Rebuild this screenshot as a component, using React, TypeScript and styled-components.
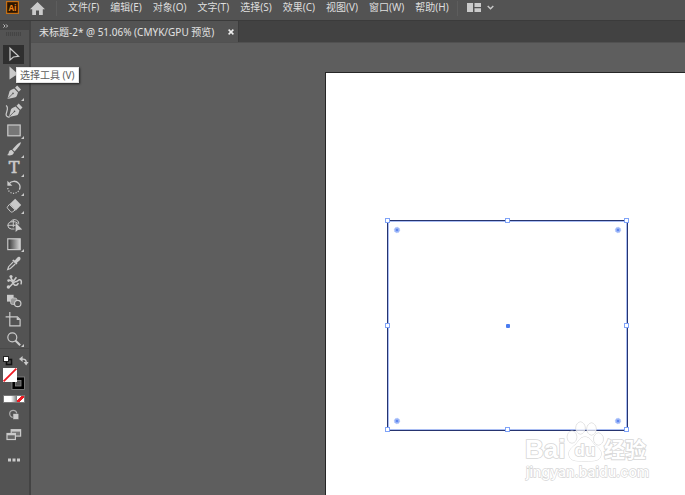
import React from 'react';
import styled, { createGlobalStyle } from 'styled-components';

const ui = '"Noto Sans", "Noto Sans CJK SC", sans-serif';
const ink = '#cacaca';

const GlobalStyle = createGlobalStyle`
  * { box-sizing: border-box; }
  body { margin: 0; background: #5e5e5e; font-family: ${ui}; overflow: hidden; }
  button { margin: 0; padding: 0; border: 0; background: none; color: inherit; font: inherit; cursor: default; }
  svg { display: block; overflow: visible; }
`;

const Window = styled.div`
  display: flex;
  flex-direction: column;
  height: 100vh;
  color: #dedede;
  font-size: 10px;
`;

const MenuBar = styled.header`
  display: flex;
  flex: none;
  align-items: flex-start;
  height: 21px;
  padding: 1px 0 0 6px;
  background: #535353;
  border-bottom: 1px solid #3b3b3b;
`;

const HomeButton = styled.button`
  margin: 1px 11px 0;
`;

const Divider = styled.span`
  width: 1px;
  height: 15px;
  background: #5d5d5d;
`;

const Menus = styled.nav`
  display: flex;
  gap: 11px;
  margin: 0 8px 0 11px;
`;

const MenuButton = styled.button`
  line-height: 13px;
  white-space: nowrap;
`;

const LayoutButton = styled.button`
  display: flex;
  gap: 6px;
  align-items: center;
  margin: 2px 0 0 9px;
`;

const Workspace = styled.div`
  display: flex;
  flex: 1;
  min-height: 0;
`;

const Toolbar = styled.aside`
  position: relative;
  z-index: 2;
  display: flex;
  flex: none;
  flex-direction: column;
  width: 31px;
  background: #535353;
  border-right: 2px solid #434343;
`;

const ToolbarHead = styled.button`
  flex: none;
  height: 9px;
  padding-left: 3px;
  background: #454545;
`;

const Grip = styled.div`
  flex: none;
  height: 4px;
  margin: 2px 8px 9px 6px;
  background: repeating-linear-gradient(90deg, #454545 0 1px, #505050 1px 2px);
`;

const Tools = styled.div`
  display: grid;
  flex: none;
  grid-auto-rows: 1fr;
  height: 303px;
`;

const ToolButton = styled.button<{ $active?: boolean; $more?: boolean }>`
  position: relative;
  width: 21px;
  margin-left: 3px;
  padding-left: 2px;
  background: ${p => (p.$active ? '#2f2f2f' : 'transparent')};
  &::after {
    content: '';
    display: ${p => (p.$more ? 'block' : 'none')};
    position: absolute;
    right: 0;
    bottom: 1px;
    border-left: 3px solid transparent;
    border-bottom: 3px solid ${ink};
  }
`;

const Tooltip = styled.div`
  position: absolute;
  left: 16px;
  top: 46px;
  padding: 0 3px;
  background: #fff;
  border: 1px solid #e4e4e4;
  box-shadow: 1px 1px 2px #222;
  color: #5d5d5d;
  line-height: 14px;
  white-space: nowrap;
`;

const ColorControls = styled.div`
  display: flex;
  flex-direction: column;
  padding: 4px 0 0 3px;
  border-top: 1px solid #494949;
`;

const SwapRow = styled.div`
  display: flex;
  gap: 7px;
  height: 15px;
`;

const Modes = styled.div`
  display: flex;
  width: 22px;
  height: 8px;
  margin-top: 5px;
  border: 1px solid #777;
`;

const Mode = styled.button<{ $fill: string }>`
  flex: 1;
  background: ${p => p.$fill};
`;

const Extras = styled.div`
  display: flex;
  flex-direction: column;
  align-items: flex-start;
  gap: 3px;
  padding: 3px 0 0 2px;
`;

const ExtraButton = styled.button`
  height: 18px;
`;

const Documents = styled.main`
  display: flex;
  flex: 1;
  flex-direction: column;
  min-width: 0;
`;

const TabStrip = styled.div`
  display: flex;
  flex: none;
  height: 22px;
  background: #424242;
  border-bottom: 1px solid #515151;
`;

const Tab = styled.div`
  display: flex;
  gap: 14px;
  align-items: center;
  padding: 0 4px 0 8px;
  background: #535353;
  border-right: 1px solid #3c3c3c;
  color: #e2e2e2;
  white-space: nowrap;
`;

const Canvas = styled.div`
  display: flex;
  flex: 1;
  min-height: 0;
  padding: 29px 0 0 294px;
  background: #5e5e5e;
`;

const Artboard = styled.div`
  position: relative;
  flex: 1;
  background: #fff;
  border: solid #262626;
  border-width: 1px 0 0 1px;
`;

const Shape = styled.div`
  position: absolute;
  left: 62px;
  top: 148px;
  width: 239px;
  height: 209px;
  box-shadow: 0 0 0 1px #26346f, inset 0 0 0 1px #a9bdf3;
`;

const Handle = styled.i<{ $x: string; $y: string }>`
  position: absolute;
  left: ${p => p.$x};
  top: ${p => p.$y};
  width: 5px;
  height: 5px;
  margin: -3px;
  background: #fff;
  border: 1px solid #7fa3f8;
`;

const Corner = styled.i<{ $right?: boolean; $low?: boolean }>`
  position: absolute;
  ${p => (p.$right ? 'right: 6px;' : 'left: 6px;')}
  ${p => (p.$low ? 'bottom: 6px;' : 'top: 6px;')}
`;

const Center = styled.i`
  position: absolute;
  left: 50%;
  top: 50%;
  width: 4px;
  height: 4px;
  margin: -2px;
  border-radius: 1px;
  background: #4a7cf0;
`;

const Watermark = styled.div`
  position: absolute;
  left: 200px;
  top: 346px;
`;

const Icon = ({ children, w = 18, h = 18 }: { children: React.ReactNode; w?: number; h?: number }) => (
  <svg width={w} height={h} viewBox={`0 0 ${w} ${h}`} fill="none" stroke={ink} strokeWidth="1.2" aria-hidden="true">
    {children}
  </svg>
);

const solid = { fill: ink, stroke: 'none' };

const Nib = () => (
  <>
    <path d="M2.4 16 4.2 9.4c.2-1.400 1-2.200 2.200-2.700l2.700-1.100L13 9.600l-1 2.800c-.5 1.200-1.200 1.800-2.600 2.200z" {...solid} />
    <path d="M10 4.800 12.200 2.600 16 6.400l-2.200 2.300z" {...solid} />
    <path d="M2.800 15.600 7.600 10.800" stroke="#535353" strokeWidth="0.8" />
    <circle cx="8" cy="10.400" r="0.800" fill="#535353" stroke="none" />
  </>
);

const tools: { name: string; more?: boolean; art: React.ReactNode }[] = [
  { name: '选择工具', art: <path d="M5 3.2V15l3.4-3 5.2-.6z" /> },
  { name: '直接选择工具', art: <path d="M4.5 2.500v13L10 11.800l3.500-1.400z" {...solid} /> },
  { name: '钢笔工具', more: true, art: <Nib /> },
  {
    name: '曲率工具',
    art: (
      <>
        <g transform="translate(1.500 -1)"><Nib /></g>
        <path d="M1 3.600C4.400 5.600 1.200 9.800 1.100 12.400c0 2 1.700 3 3.600 2.600" />
      </>
    ),
  },
  { name: '矩形工具', more: true, art: <rect x="2.8" y="4" width="12.4" height="10.8" fill="#777" /> },
  {
    name: '画笔工具',
    more: true,
    art: (
      <>
        <path d="M15.800 2.200C14.400 1.900 9.800 6.600 7.400 9.400l2.200 2c2.800-2.800 7-8 6.200-9.200z" {...solid} />
        <path d="M6.700 10.100c-2.300-.2-2.700 1.500-3 2.700-.3 1-.9 1.900-1.800 2.300 2.900.8 6.800.2 7-2.900z" {...solid} />
      </>
    ),
  },
  {
    name: '文字工具',
    more: true,
    art: (
      <text x="9" y="14" textAnchor="middle" fontFamily="DejaVu Serif" fontSize="16" fill={ink} stroke={ink} strokeWidth="0.6">T</text>
    ),
  },
  {
    name: '旋转工具',
    more: true,
    art: (
      <>
        <path d="M4 5.800C6.400 2.500 11.200 2.500 13.600 5.400c1.600 1.800 1.700 4.300.8 6.200" strokeWidth="1.300" />
        <path d="M2.400 2.800v5h5z" {...solid} />
        <path d="M13.600 12.800c-2.400 3.400-7.600 3.200-9.800 0-.7-1-1-2.200-1-3.400" strokeDasharray="1.200 1.400" />
      </>
    ),
  },
  {
    name: '橡皮擦工具',
    more: true,
    art: (
      <>
        <path d="M10.200 1.800 16.200 8l-5.300 5.400L4.700 7z" {...solid} />
        <path d="M4.400 7.400 2.500 9.800c-.4.4-.4 1 0 1.400l3 3.400c.7.700 1.600.7 2.300.1l2.400-1.700z" strokeWidth="1" />
      </>
    ),
  },
  {
    name: '形状生成器工具',
    art: (
      <>
        <path d="M9.500 13H6.400a4 3.600 0 0 1-.8-7C7 2.400 13.800 3 13.800 7.600M2.600 9.300h8M8.300 3.900v7.300M5.600 6c3.600-1 7 .2 8.200 2.400" strokeWidth="1" />
        <path d="M10.600 6.600V16l2.300-2.100 4.300-.3z" {...solid} />
      </>
    ),
  },
  {
    name: '渐变工具',
    more: true,
    art: (
      <>
        <defs>
          <linearGradient id="ramp"><stop stopColor="#333" /><stop offset="1" stopColor="#d8d8d8" /></linearGradient>
        </defs>
        <rect x="2.8" y="3.8" width="12.4" height="10.8" fill="url(#ramp)" />
      </>
    ),
  },
  {
    name: '吸管工具',
    art: (
      <>
        <path d="m9.800 6.500 2.600-3.100c1.700-1.600 4.300.5 2.700 2.500L12 8.700l.4.700-1.200 1.200-4-4 1.200-1z" {...solid} />
        <path d="m8.200 7.800-4.600 4.900-.9 2.800 2.700-1L10.200 10" />
      </>
    ),
  },
  {
    name: '操控变形工具',
    art: (
      <>
        <path d="M3.400 14c3.200-.4 3.600-4.600 6.800-5.200 2.600-.5 3-2.200 4.600-2 1.700.2 1.900 2.200 1.200 4.600M4 7.400c2.600-.8 3.600 1.500 4.600 3.400 1.200 2.200 3.900 1.900 4.700-.8" strokeWidth="1.500" />
        <path d="M6 3.400c-.2 2 .6 3.600 2.600 4.600l2.800-3.800" strokeWidth="1.600" />
        <circle cx="6" cy="3.600" r="1.600" {...solid} />
        <circle cx="3.400" cy="14" r="1.700" {...solid} />
        <circle cx="3.600" cy="7.600" r="1.300" {...solid} />
      </>
    ),
  },
  {
    name: '混合工具',
    art: (
      <>
        <rect x="2" y="2.800" width="6.600" height="6.800" {...solid} />
        <rect x="5.500" y="6" width="6.500" height="6.500" rx="2" fill="#999" strokeWidth="0.800" />
        <circle cx="12.700" cy="11.500" r="3.200" fill="#535353" />
      </>
    ),
  },
  {
    name: '画板工具',
    art: (
      <>
        <path d="M4.800 1v13.800h10.300V8.500l-2.700-2.700H.600" />
        <path d="M11.700 5.800v3.200h3.400z" {...solid} />
      </>
    ),
  },
  {
    name: '缩放工具',
    more: true,
    art: (
      <>
        <circle cx="7.300" cy="7.300" r="4.500" />
        <path d="m10.600 10.700 4.600 4.600" strokeWidth="2" />
      </>
    ),
  },
];

const menus = ['文件(F)', '编辑(E)', '对象(O)', '文字(T)', '选择(S)', '效果(C)', '视图(V)', '窗口(W)', '帮助(H)'];

const handles = [
  ['0%', '0%'], ['50%', '0%'], ['100%', '0%'],
  ['0%', '50%'], ['100%', '50%'],
  ['0%', '100%'], ['50%', '100%'], ['100%', '100%'],
];

const CornerWidget = (p: { $right?: boolean; $low?: boolean }) => (
  <Corner {...p}>
    <svg width="6" height="6" viewBox="0 0 6 6" aria-hidden="true">
      <circle cx="3" cy="3" r="2.700" fill="#9db7f8" stroke="#9db7f8" strokeWidth="0.600" strokeDasharray="1.200 0.900" />
      <circle cx="3" cy="3" r="1.300" fill="#5f86ee" />
    </svg>
  </Corner>
);

export default function App() {
  return (
    <Window>
      <GlobalStyle />
      <MenuBar>
        <svg width="13" height="13" viewBox="0 0 13 13" aria-label="Ai">
          <rect x="0.6" y="0.6" width="11.8" height="11.8" fill="#2b1500" stroke="#c66f13" strokeWidth="1.2" />
          <text x="6.5" y="9.5" textAnchor="middle" fontFamily="Open Sans" fontWeight="bold" fontSize="8" fill="#ee8419">Ai</text>
        </svg>
        <HomeButton aria-label="主页">
          <Icon w={15} h={13}>
            <path d="M7.5 0 15 7.2h-2.2V13H9V8.6H6V13H2.2V7.2H0z" {...solid} />
          </Icon>
        </HomeButton>
        <Divider />
        <Menus>
          {menus.map(m => <MenuButton key={m}>{m}</MenuButton>)}
        </Menus>
        <Divider />
        <LayoutButton aria-label="排列文档">
          <Icon w={14} h={9}>
            <path d="M0 0h6v9H0zM7.5 0H14v4H7.5zM7.5 5.2H14V9H7.5z" {...solid} />
          </Icon>
          <Icon w={7} h={5}><path d="m.7 1 2.8 2.7L6.3 1" strokeWidth="1.4" /></Icon>
        </LayoutButton>
      </MenuBar>
      <Workspace>
        <Toolbar>
          <ToolbarHead aria-label="展开工具栏">
            <Icon w={5} h={4}><path d="m.4.4 1.6 1.6L.4 3.6M3 .4l1.6 1.6L3 3.6" strokeWidth="0.9" /></Icon>
          </ToolbarHead>
          <Grip />
          <Tools>
            {tools.map((t, i) => (
              <ToolButton key={t.name} aria-label={t.name} $active={i === 0} $more={t.more}>
                <Icon>{t.art}</Icon>
              </ToolButton>
            ))}
          </Tools>
          <ColorControls>
            <SwapRow>
              <button aria-label="默认填色和描边">
                <Icon w={9} h={10}>
                  <rect x="3.5" y="3.5" width="5" height="5" stroke="#111" strokeWidth="1.6" />
                  <rect x="0.5" y="0.5" width="5" height="5" fill="#fff" stroke="#222" strokeWidth="1" />
                </Icon>
              </button>
              <button aria-label="互换填色和描边">
                <Icon w={10} h={10}>
                  <path d="M3 3.2c3.3-.3 4.4 1.2 4.2 4" strokeWidth="1.4" />
                  <path d="M3.6 0v6L0 3zM4.6 6h5L7.1 9.6z" {...solid} />
                </Icon>
              </button>
            </SwapRow>
            <button aria-label="填色和描边">
              <Icon w={22} h={22}>
                <rect x="9" y="9" width="12.5" height="12.5" fill="#000" stroke="#888" strokeWidth="0.8" />
                <rect x="12.5" y="12.5" width="5.5" height="5.5" fill="#535353" stroke="#888" strokeWidth="0.8" />
                <rect x="0" y="0" width="14" height="14" fill="#fff" stroke="none" />
                <path d="M.6 13.4 13.4.6" stroke="#ee1c24" strokeWidth="1.8" />
              </Icon>
            </button>
            <Modes>
              <Mode aria-label="颜色" $fill="#fff" />
              <Mode aria-label="渐变" $fill="linear-gradient(90deg, #fff, #777)" />
              <Mode aria-label="无" $fill="linear-gradient(135deg, #fff 36%, #ee1c24 36% 64%, #fff 64%)" />
            </Modes>
            <Extras>
              <ExtraButton aria-label="绘图模式">
                <Icon>
                  <circle cx="8.2" cy="7.800" r="3.500" stroke="#aaa" strokeWidth="1.300" />
                  <rect x="8" y="7.600" width="5.800" height="5.800" fill={ink} stroke="#535353" strokeWidth="0.500" />
                </Icon>
              </ExtraButton>
              <ExtraButton aria-label="屏幕模式">
                <Icon>
                  <rect x="6.2" y="2.700" width="9.400" height="6.400" fill="#777" />
                  <path d="M6.200 3.700h9.400" strokeWidth="1.800" />
                  <rect x="2" y="6.500" width="8.400" height="6" fill="#666" />
                  <path d="M2 7.500h8.400" strokeWidth="1.600" />
                </Icon>
              </ExtraButton>
              <ExtraButton aria-label="编辑工具栏">
                <Icon>
                  <path d="M3 10.500h3v3H3zM7.500 10.500h3v3h-3zM12 10.500h3v3h-3z" {...solid} />
                </Icon>
              </ExtraButton>
            </Extras>
          </ColorControls>
          <Tooltip role="tooltip">选择工具 (V)</Tooltip>
        </Toolbar>
        <Documents>
          <TabStrip>
            <Tab>
              未标题-2* @ 51.06% (CMYK/GPU 预览)
              <button aria-label="关闭">
                <Icon w={6} h={6}><path d="m.6.6 4.8 4.8M5.4.6.6 5.4" stroke="#eee" strokeWidth="1.5" /></Icon>
              </button>
            </Tab>
          </TabStrip>
          <Canvas>
            <Artboard>
              <Shape>
                {handles.map(([x, y]) => <Handle key={x + y} $x={x} $y={y} />)}
                <CornerWidget />
                <CornerWidget $right />
                <CornerWidget $low />
                <CornerWidget $right $low />
                <Center />
              </Shape>
              <Watermark>
                <svg width="124" height="62" viewBox="0 0 124 62" fill="#fff" fillOpacity="0.7" stroke="#d6d6d6" strokeWidth="1.6" paintOrder="stroke" fontFamily="Liberation Sans, Noto Sans CJK SC, sans-serif" fontWeight="bold">
                  <text x="-1" y="39" fontSize="26" fillOpacity="1">Bai</text>
                  <g strokeWidth="1">
                    <ellipse cx="46" cy="18" rx="4.8" ry="6" />
                    <ellipse cx="54.5" cy="9" rx="4.6" ry="6" />
                    <ellipse cx="65.5" cy="10" rx="4.6" ry="6" />
                    <ellipse cx="72.500" cy="20" rx="4.8" ry="6" />
                    <path fillOpacity="1" d="M59 18c5 0 6 4 9 7s8 6 7 11c-1 6-6 6-16 6s-15 0-16-6c-1-5 4-8 7-11s4-7 9-7z" />
                  </g>
                  <text x="59" y="37" textAnchor="middle" fontSize="17" fillOpacity="1">du</text>
                  <text x="78" y="38" fontSize="21" fontFamily="Noto Sans CJK SC" fillOpacity="1">经验</text>
                  <text x="0" y="58" fontSize="14" fontFamily="Inter" fontWeight="500" strokeWidth="1.300" fillOpacity="1">jingyan.baidu.com</text>
                </svg>
              </Watermark>
            </Artboard>
          </Canvas>
        </Documents>
      </Workspace>
    </Window>
  );
}
